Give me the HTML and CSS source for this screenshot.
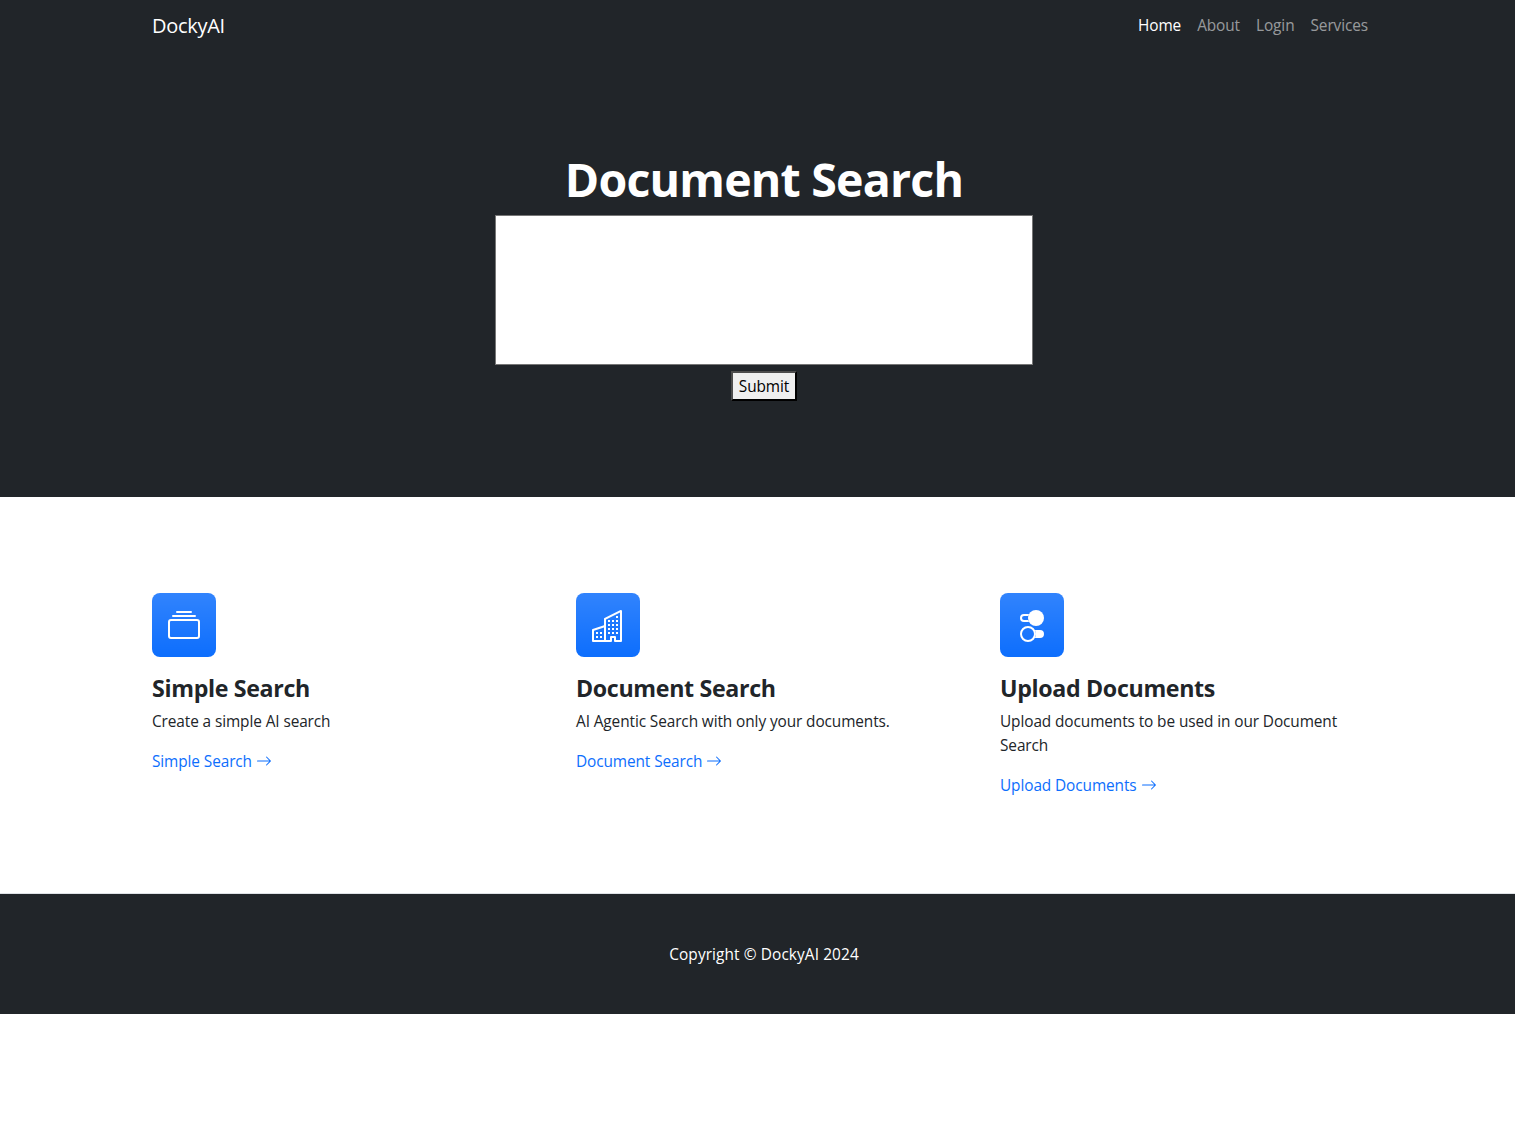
FILE: index.html
```html
<!DOCTYPE html>
<html lang="en">
<head>
<meta charset="utf-8">
<title>DockyAI</title>
<link rel="stylesheet" href="styles.css">
</head>
<body>
<nav class="navbar">
  <div class="container navbar-inner">
    <a class="brand" href="#">DockyAI</a>
    <ul class="nav-links">
      <li><a class="nav-link active" href="#">Home</a></li>
      <li><a class="nav-link" href="#">About</a></li>
      <li><a class="nav-link" href="#">Login</a></li>
      <li><a class="nav-link" href="#">Services</a></li>
    </ul>
  </div>
</nav>
<header class="hero">
  <h1>Document Search</h1>
  <form class="search-form">
    <textarea class="query" aria-label="Search"></textarea>
    <button class="submit" type="button">Submit</button>
  </form>
</header>
<section class="features">
  <div class="container feature-grid">
    <div class="feature">
      <div class="feature-icon">
        <svg viewBox="0 0 16 16"><path d="M2.5 3.5a.5.5 0 0 1 0-1h11a.5.5 0 0 1 0 1h-11zm2-2a.5.5 0 0 1 0-1h7a.5.5 0 0 1 0 1h-7zM0 13a1.5 1.5 0 0 0 1.5 1.5h13A1.5 1.5 0 0 0 16 13V6a1.5 1.5 0 0 0-1.5-1.5h-13A1.5 1.5 0 0 0 0 6v7zm1.5.5A.5.5 0 0 1 1 13V6a.5.5 0 0 1 .5-.5h13a.5.5 0 0 1 .5.5v7a.5.5 0 0 1-.5.5h-13z"/></svg>
      </div>
      <h2>Simple Search</h2>
      <p>Create a simple AI search</p>
      <a class="feature-link" href="#"><span>Simple Search</span><svg viewBox="0 0 16 16"><path d="M1 8a.5.5 0 0 1 .5-.5h11.793l-3.147-3.146a.5.5 0 0 1 .708-.708l4 4a.5.5 0 0 1 0 .708l-4 4a.5.5 0 0 1-.708-.708L13.293 8.5H1.5A.5.5 0 0 1 1 8z"/></svg></a>
    </div>
    <div class="feature">
      <div class="feature-icon">
        <svg viewBox="0 0 16 16"><path d="M14.763.075A.5.5 0 0 1 15 .5v15a.5.5 0 0 1-.5.5h-3a.5.5 0 0 1-.5-.5V14h-1v1.5a.5.5 0 0 1-.5.5h-9a.5.5 0 0 1-.5-.5V10a.5.5 0 0 1 .342-.474L6 7.64V4.5a.5.5 0 0 1 .276-.447l8-4a.5.5 0 0 1 .487.022zM6 8.694 1 10.36V15h5V8.694zM7 15h2v-1.5a.5.5 0 0 1 .5-.5h2a.5.5 0 0 1 .5.5V15h2V1.309l-7 3.5V15z"/><path d="M2 11h1v1H2v-1zm2 0h1v1H4v-1zm-2 2h1v1H2v-1zm2 0h1v1H4v-1zm4-4h1v1H8V9zm2 0h1v1h-1V9zm-2 2h1v1H8v-1zm2 0h1v1h-1v-1zm2-2h1v1h-1V9zm0 2h1v1h-1v-1zM8 7h1v1H8V7zm2 0h1v1h-1V7zm2 0h1v1h-1V7zM8 5h1v1H8V5zm2 0h1v1h-1V5zm2 0h1v1h-1V5zm0-2h1v1h-1V3z"/></svg>
      </div>
      <h2>Document Search</h2>
      <p>AI Agentic Search with only your documents.</p>
      <a class="feature-link" href="#"><span>Document Search</span><svg viewBox="0 0 16 16"><path d="M1 8a.5.5 0 0 1 .5-.5h11.793l-3.147-3.146a.5.5 0 0 1 .708-.708l4 4a.5.5 0 0 1 0 .708l-4 4a.5.5 0 0 1-.708-.708L13.293 8.5H1.5A.5.5 0 0 1 1 8z"/></svg></a>
    </div>
    <div class="feature">
      <div class="feature-icon">
        <svg viewBox="0 0 16 16"><path d="M9.465 10H12a2 2 0 1 1 0 4H9.465c.34-.588.535-1.271.535-2 0-.729-.195-1.412-.535-2z"/><path d="M6 15a3 3 0 1 0 0-6 3 3 0 0 0 0 6zm0 1a4 4 0 1 1 0-8 4 4 0 0 1 0 8zm.535-10a3.975 3.975 0 0 1-.409-1H4a1 1 0 0 1 0-2h2.126c.091-.355.23-.69.41-1H4a2 2 0 1 0 0 4h2.535z"/><path d="M14 4a4 4 0 1 1-8 0 4 4 0 0 1 8 0z"/></svg>
      </div>
      <h2>Upload Documents</h2>
      <p>Upload documents to be used in our Document Search</p>
      <a class="feature-link" href="#"><span>Upload Documents</span><svg viewBox="0 0 16 16"><path d="M1 8a.5.5 0 0 1 .5-.5h11.793l-3.147-3.146a.5.5 0 0 1 .708-.708l4 4a.5.5 0 0 1 0 .708l-4 4a.5.5 0 0 1-.708-.708L13.293 8.5H1.5A.5.5 0 0 1 1 8z"/></svg></a>
    </div>
  </div>
</section>
<footer class="footer">
  <p>Copyright © DockyAI 2024</p>
</footer>
</body>
</html>
```
FILE: styles.css
```css
* { box-sizing: border-box; }
html { overflow: hidden; background: #fff; }
body {
  width: 1528px;
  margin: 0;
  font-family: "Segoe UI", "Open Sans", "Noto Sans", sans-serif;
  font-size: 15.4px;
  line-height: 24px;
  letter-spacing: -0.1px;
  color: #212529;
}
h1, h2, p, ul { margin: 0; padding: 0; }
a { text-decoration: none; }
.container { width: 1320px; margin: 0 auto; padding: 0 48px; }
.navbar { background: #212529; height: 54px; }
.navbar-inner { display: flex; align-items: center; justify-content: space-between; height: 52px; }
.brand { color: #fff; font-size: 20px; line-height: 30px; letter-spacing: -0.3px; }
.nav-links { display: flex; list-style: none; }
.nav-link { display: block; padding: 8px; color: rgba(255, 255, 255, .55); }
.nav-link.active { color: #fff; }
.hero {
  display: flex;
  flex-direction: column;
  align-items: center;
  height: 443px;
  padding-top: 97px;
  background: #212529;
}
.hero h1 { color: #fff; font-size: 46.5px; font-weight: 700; line-height: 57px; letter-spacing: -0.8px; margin-bottom: 7px; }
.search-form { display: flex; flex-direction: column; align-items: center; gap: 6px; }
.query { width: 538px; height: 150px; border: 1px solid #767676; border-radius: 0; background: #fff; resize: none; }
.submit {
  width: 66px;
  height: 30px;
  padding: 2px 0 0;
  border: 2px outset #000;
  border-color: #4c4c4c #000 #000 #4c4c4c;
  border-radius: 0;
  background: #efefef;
  color: #000;
  font: inherit;
  letter-spacing: inherit;
}
.features { height: 397px; padding-top: 96px; border-bottom: 1px solid #dee2e6; }
.feature-grid { display: grid; grid-template-columns: repeat(3, 376px); gap: 48px; }
.feature-icon {
  display: flex;
  align-items: center;
  justify-content: center;
  width: 64px;
  height: 64px;
  padding-top: 2px;
  margin-bottom: 17px;
  border-radius: 8px;
  background: #0d6efd linear-gradient(180deg, rgba(255, 255, 255, .15), rgba(255, 255, 255, 0));
}
.feature-icon svg { width: 32px; height: 32px; fill: #fff; }
.feature h2 { font-size: 23.2px; line-height: 29px; letter-spacing: -0.33px; margin-bottom: 7px; }
.feature p { margin-bottom: 16px; }
.feature-link { display: flex; align-items: center; gap: 4px; color: #0d6efd; }
.feature-link svg { width: 16px; height: 16px; margin-bottom: 2px; fill: currentColor; }
.footer { height: 120px; padding-top: 49px; background: #212529; color: #fff; text-align: center; letter-spacing: 0.1px; }
```
